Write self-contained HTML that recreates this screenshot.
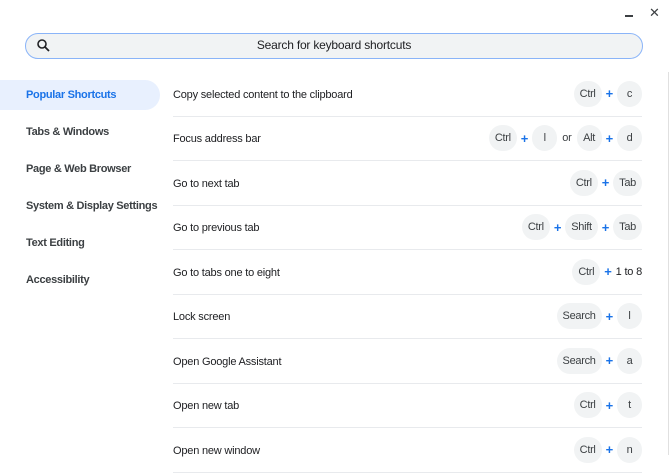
<!DOCTYPE html>
<html><head><style>
*{margin:0;padding:0;box-sizing:border-box}
body{width:670px;height:455px;overflow:hidden;background:#fff;font-family:"Liberation Sans",sans-serif;color:#3c4043;position:relative}
.min{position:absolute;left:625px;top:15px;width:8px;height:2px;background:#3c4043}
.x{position:absolute;left:649px;top:5px;font-size:13px;color:#3c4043}
.search{position:absolute;left:25px;top:33px;width:618px;height:26px;border:1.5px solid #8ab4f8;border-radius:13px;background:#f1f3f4;text-align:center;font-size:12px;line-height:23px;color:#202124;letter-spacing:-0.2px}
.search svg{position:absolute;left:11px;top:5px}
.side{position:absolute;left:0;top:80px;width:160px}
.si{height:37px;line-height:30px;padding-left:26px;font-size:11px;font-weight:bold;color:#3c4043;white-space:nowrap;letter-spacing:-0.3px}
.si.a{background:#e8f0fe;color:#1a73e8;border-radius:0 15px 15px 0;height:30px;margin-bottom:7px}
.rows{position:absolute;left:173px;top:72px;width:469px}
.r{height:44.5px;border-bottom:1px solid #e8eaed;display:flex;align-items:center;justify-content:space-between;font-size:11px;color:#202124;letter-spacing:-0.2px}
.r>span:first-child{margin-top:2px}
.k{display:flex;align-items:center}
.p{background:#f1f3f4;border-radius:13px;height:26px;min-width:25px;padding:0 6px;line-height:26px;text-align:center;font-size:11px;color:#3c4043;letter-spacing:-0.3px}
.pl{color:#1a73e8;font-weight:bold;font-size:13px;margin:0 4px}
.t{font-size:11px;color:#3c4043;margin:0 5px}
.vl{position:absolute;left:668px;top:72px;width:1px;height:383px;background:#e0e0e0}
</style></head><body>
<div class="min"></div><div class="x">✕</div>
<div class="search"><svg width="13" height="13" viewBox="0 0 13 13"><circle cx="5" cy="5" r="4" fill="none" stroke="#202124" stroke-width="1.6"/><path d="M8 8l4 4" stroke="#202124" stroke-width="1.8"/></svg>Search for keyboard shortcuts</div>
<div class="side">
<div class="si a">Popular Shortcuts</div>
<div class="si">Tabs &amp; Windows</div>
<div class="si">Page &amp; Web Browser</div>
<div class="si">System &amp; Display Settings</div>
<div class="si">Text Editing</div>
<div class="si">Accessibility</div>
</div>
<div class="vl"></div>
<div class="rows">
<div class="r"><span>Copy selected content to the clipboard</span><span class="k"><span class="p">Ctrl</span><span class="pl">+</span><span class="p">c</span></span></div>
<div class="r"><span>Focus address bar</span><span class="k"><span class="p">Ctrl</span><span class="pl">+</span><span class="p">l</span><span class="t">or</span><span class="p">Alt</span><span class="pl">+</span><span class="p">d</span></span></div>
<div class="r"><span>Go to next tab</span><span class="k"><span class="p">Ctrl</span><span class="pl">+</span><span class="p">Tab</span></span></div>
<div class="r"><span>Go to previous tab</span><span class="k"><span class="p">Ctrl</span><span class="pl">+</span><span class="p">Shift</span><span class="pl">+</span><span class="p">Tab</span></span></div>
<div class="r"><span>Go to tabs one to eight</span><span class="k"><span class="p">Ctrl</span><span class="pl">+</span><span style="font-size:11px;color:#202124">1 to 8</span></span></div>
<div class="r"><span>Lock screen</span><span class="k"><span class="p">Search</span><span class="pl">+</span><span class="p">l</span></span></div>
<div class="r"><span>Open Google Assistant</span><span class="k"><span class="p">Search</span><span class="pl">+</span><span class="p">a</span></span></div>
<div class="r"><span>Open new tab</span><span class="k"><span class="p">Ctrl</span><span class="pl">+</span><span class="p">t</span></span></div>
<div class="r"><span>Open new window</span><span class="k"><span class="p">Ctrl</span><span class="pl">+</span><span class="p">n</span></span></div>
</div>
</body></html>
